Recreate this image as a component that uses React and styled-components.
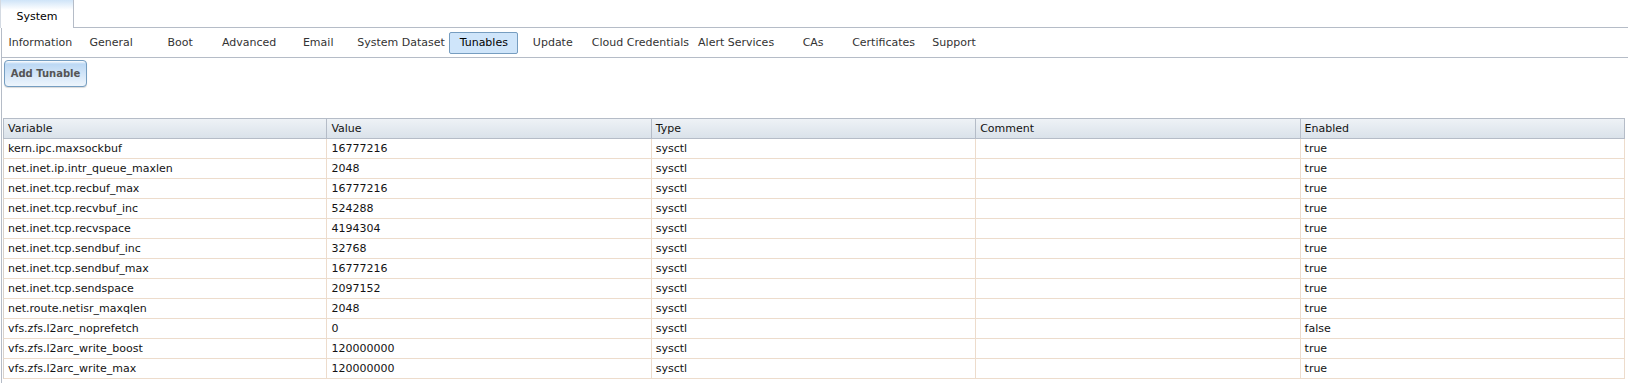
import React from "react";
import styled, { createGlobalStyle } from "styled-components";

const GlobalStyle = createGlobalStyle`
  html, body {
    margin: 0;
    padding: 0;
    background: #fff;
    overflow: hidden;
  }
`;

const navItems = [
  "Information",
  "General",
  "Boot",
  "Advanced",
  "Email",
  "System Dataset",
  "Tunables",
  "Update",
  "Cloud Credentials",
  "Alert Services",
  "CAs",
  "Certificates",
  "Support"
];

const columns = ["Variable", "Value", "Type", "Comment", "Enabled"];

const tunables = [
  { variable: "kern.ipc.maxsockbuf", value: "16777216", enabled: true },
  { variable: "net.inet.ip.intr_queue_maxlen", value: "2048", enabled: true },
  { variable: "net.inet.tcp.recbuf_max", value: "16777216", enabled: true },
  { variable: "net.inet.tcp.recvbuf_inc", value: "524288", enabled: true },
  { variable: "net.inet.tcp.recvspace", value: "4194304", enabled: true },
  { variable: "net.inet.tcp.sendbuf_inc", value: "32768", enabled: true },
  { variable: "net.inet.tcp.sendbuf_max", value: "16777216", enabled: true },
  { variable: "net.inet.tcp.sendspace", value: "2097152", enabled: true },
  { variable: "net.route.netisr_maxqlen", value: "2048", enabled: true },
  { variable: "vfs.zfs.l2arc_noprefetch", value: "0", enabled: false },
  { variable: "vfs.zfs.l2arc_write_boost", value: "120000000", enabled: true },
  { variable: "vfs.zfs.l2arc_write_max", value: "120000000", enabled: true }
];

export default function App() {
  return (
    <Page>
      <GlobalStyle />
      <TabStrip>
        <Tab>System</Tab>
      </TabStrip>
      <Pane>
        <NavBar>
          {navItems.map(item => (
            <NavItem key={item} $active={item === "Tunables"}>
              {item}
            </NavItem>
          ))}
        </NavBar>
        <AddButton>Add Tunable</AddButton>
        <Grid>
          <colgroup>
            {columns.map(c => (
              <col key={c} style={{ width: "20%" }} />
            ))}
          </colgroup>
          <thead>
            <tr>
              {columns.map(c => (
                <HeadCell key={c}>{c}</HeadCell>
              ))}
            </tr>
          </thead>
          <tbody>
            {tunables.map(t => (
              <tr key={t.variable}>
                <Cell>{t.variable}</Cell>
                <Cell>{t.value}</Cell>
                <Cell>sysctl</Cell>
                <Cell></Cell>
                <Cell>{t.enabled ? "true" : "false"}</Cell>
              </tr>
            ))}
          </tbody>
        </Grid>
      </Pane>
    </Page>
  );
}

const Page = styled.div`
  display: flex;
  flex-direction: column;
  width: 1628px;
  min-height: 100vh;
  font-family: "DejaVu Sans", Verdana, sans-serif;
  font-size: 11px;
  color: #131313;
`;

const TabStrip = styled.div`
  display: flex;
  align-items: flex-start;
  height: 27px;
  border-bottom: 1px solid #b5bcc7;
`;

const Tab = styled.div`
  box-sizing: border-box;
  display: flex;
  align-items: center;
  justify-content: center;
  width: 74px;
  height: 28px;
  margin-bottom: -1px;
  padding-top: 4px;
  border-left: 1px solid #d4dae2;
  border-right: 1px solid #b5bcc7;
  background: linear-gradient(#cfe4f8 0, #ffffff 10px);
  font-size: 11px;
  color: #000;
`;

const Pane = styled.div`
  flex: 1;
  display: flex;
  flex-direction: column;
  align-items: flex-start;
  margin-left: 1px;
  border-left: 1px solid #b5bcc7;
`;

const NavBar = styled.div`
  align-self: stretch;
  display: flex;
  align-items: center;
  height: 29px;
  padding-left: 2px;
  border-bottom: 1px solid #b5bcc7;
`;

const NavItem = styled.div`
  box-sizing: border-box;
  display: flex;
  align-items: center;
  justify-content: center;
  min-width: 69px;
  height: 22px;
  padding: 0 3.5px;
  border: 1px solid ${p => (p.$active ? "#769dc0" : "transparent")};
  border-radius: 2px;
  background: ${p => (p.$active ? "#cfe5fa" : "transparent")};
  color: ${p => (p.$active ? "#000" : "#333")};
  white-space: nowrap;
`;

const AddButton = styled.button`
  box-sizing: border-box;
  width: 83px;
  height: 27px;
  margin: 2px 0 0 2px;
  padding: 0 0 1px;
  border: 1px solid #759dc0;
  border-radius: 4px;
  background-color: #bcd8f4;
  background-image: linear-gradient(#ffffff 0, rgba(255, 255, 255, 0) 3px, rgba(255, 255, 255, 0.75) 100%);
  box-shadow: 0 1px 1px rgba(0, 0, 0, 0.15);
  font-family: "DejaVu Sans", Verdana, sans-serif;
  font-size: 10px;
  font-weight: 700;
  color: #555;
  white-space: nowrap;
`;

const Grid = styled.table`
  width: 1622px;
  margin: 31px 0 0 1px;
  table-layout: fixed;
  border-collapse: separate;
  border-spacing: 0;
`;

const HeadCell = styled.th`
  padding: 0 4px;
  line-height: 19px;
  text-align: left;
  font-weight: 400;
  color: #131313;
  background: linear-gradient(#eef2f6, #dae2ea);
  border-top: 1px solid #b5bcc7;
  border-bottom: 1px solid #b5bcc7;
  border-right: 1px solid #b5bcc7;
  white-space: nowrap;
  &:first-child {
    border-left: 1px solid #b5bcc7;
  }
`;

const Cell = styled.td`
  padding: 0 4px;
  line-height: 19px;
  color: #131313;
  border-bottom: 1px solid #eddccc;
  border-right: 1px solid #eddccc;
  white-space: nowrap;
  overflow: hidden;
  &:first-child {
    border-left: 1px solid #d8d2cc;
  }
`;
